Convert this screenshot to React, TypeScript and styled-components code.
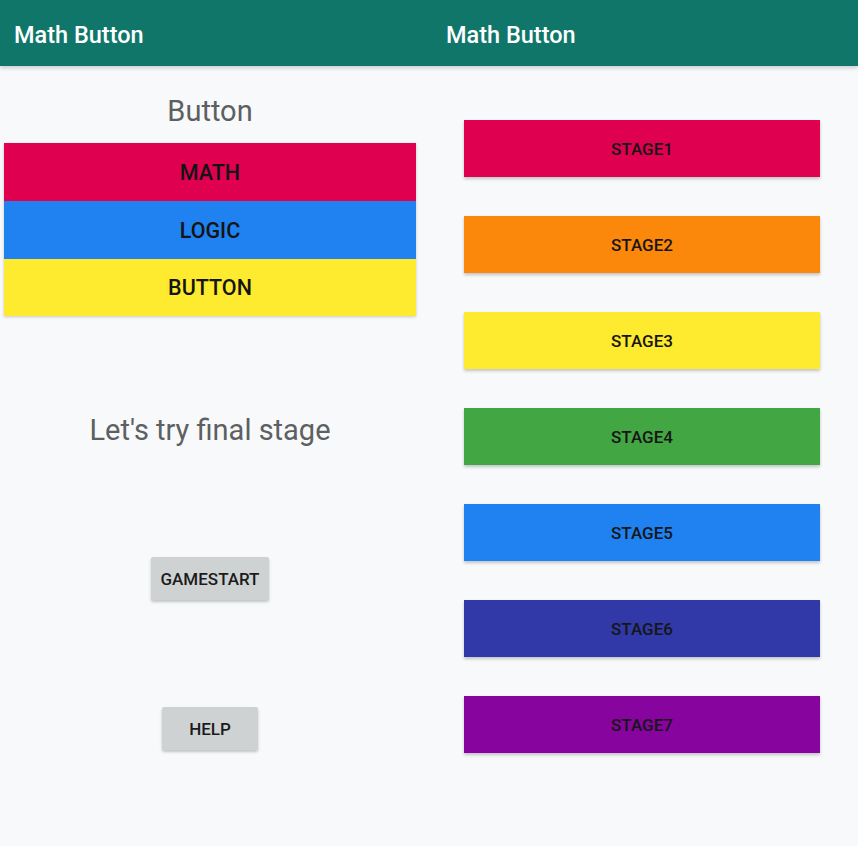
import React from "react";
import styled, { createGlobalStyle } from "styled-components";

const Global = createGlobalStyle`
  html, body { margin: 0; padding: 0; background: #f7f9fb; }
  body { font-family: Roboto, "Noto Sans", sans-serif; }
`;

const Page = styled.div`
  width: 858px;
  height: 846px;
  background: #f7f9fb;
  overflow: hidden;
`;

const AppBar = styled.header`
  height: 66px;
  background: #10766a;
  display: grid;
  grid-template-columns: 432px 1fr;
  align-items: center;
  box-shadow: 0 2px 4px rgba(0, 0, 0, 0.18);
  position: relative;
  z-index: 1;
`;

const Title = styled.div`
  padding-left: 14px;
  padding-top: 3px;
  color: #ffffff;
  font-size: 23.5px;
  font-weight: 500;
`;

const Body = styled.main`
  display: grid;
  grid-template-columns: 420px 1fr;
  column-gap: 12px;
`;

const LeftCol = styled.section`
  display: flex;
  flex-direction: column;
  align-items: center;
`;

const Heading = styled.div<{ $size: number; $mt: number }>`
  margin-top: ${(p) => p.$mt}px;
  font-size: ${(p) => p.$size}px;
  line-height: ${(p) => p.$size + 4}px;
  color: #5e5f60;
`;

const ColorStack = styled.div`
  margin-top: 15px;
  width: 412px;
  display: flex;
  flex-direction: column;
  box-shadow: 0 1px 3px rgba(0, 0, 0, 0.2);
`;

const Band = styled.div<{ $bg: string; $h: number }>`
  height: ${(p) => p.$h}px;
  background: ${(p) => p.$bg};
  display: flex;
  align-items: center;
  justify-content: center;
  font-size: 21.5px;
  font-weight: 500;
  color: #141414;
`;

const GrayButton = styled.button<{ $w: number; $mt: number }>`
  margin-top: ${(p) => p.$mt}px;
  width: ${(p) => p.$w}px;
  height: 43px;
  border: none;
  border-radius: 2px;
  background: #cfd2d3;
  box-shadow: 0 2px 3px rgba(0, 0, 0, 0.22);
  font-family: Roboto, sans-serif;
  font-size: 17px;
  font-weight: 500;
  color: #1b1b1b;
  padding: 0;
`;

const RightCol = styled.section`
  display: flex;
  flex-direction: column;
  gap: 39px;
  padding-top: 54px;
  padding-left: 32px;
`;

const StageButton = styled.button<{ $bg: string }>`
  width: 356px;
  height: 57px;
  border: none;
  padding: 0;
  background: ${(p) => p.$bg};
  box-shadow: 0 2px 3px rgba(0, 0, 0, 0.22);
  font-family: Roboto, sans-serif;
  font-size: 17px;
  font-weight: 500;
  color: #161616;
  display: flex;
  align-items: center;
  justify-content: center;
`;

const stages = [
  { label: "STAGE1", color: "#df0050" },
  { label: "STAGE2", color: "#fb870b" },
  { label: "STAGE3", color: "#feeb2f" },
  { label: "STAGE4", color: "#42a643" },
  { label: "STAGE5", color: "#1f82f0" },
  { label: "STAGE6", color: "#3039a7" },
  { label: "STAGE7", color: "#87049f" },
];

export default function App() {
  return (
    <Page>
      <Global />
      <AppBar>
        <Title>Math Button</Title>
        <Title>Math Button</Title>
      </AppBar>
      <Body>
        <LeftCol>
          <Heading $size={29} $mt={29}>Button</Heading>
          <ColorStack>
            <Band $bg="#df0050" $h={58}>MATH</Band>
            <Band $bg="#1f82f0" $h={58}>LOGIC</Band>
            <Band $bg="#feeb2f" $h={57}>BUTTON</Band>
          </ColorStack>
          <Heading $size={29} $mt={98}>Let's try final stage</Heading>
          <GrayButton $w={118} $mt={110}>GAMESTART</GrayButton>
          <GrayButton $w={96} $mt={107}>HELP</GrayButton>
        </LeftCol>
        <RightCol>
          {stages.map((s) => (
            <StageButton key={s.label} $bg={s.color}>
              {s.label}
            </StageButton>
          ))}
        </RightCol>
      </Body>
    </Page>
  );
}
